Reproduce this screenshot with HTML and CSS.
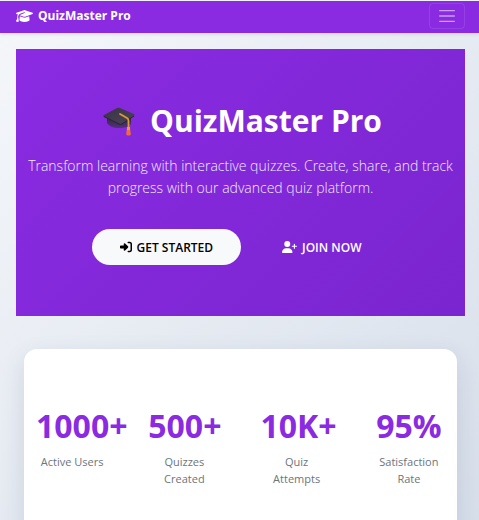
FILE: index.html
```html
<!DOCTYPE html>
<html lang="en">
<head>
<meta charset="utf-8">
<meta name="viewport" content="width=device-width, initial-scale=1">
<title>QuizMaster Pro</title>
<link rel="stylesheet" href="styles.css">
</head>
<body>
<header class="navbar">
  <a class="brand" href="#">
    <svg class="brand-icon" viewBox="0 0 640 512" aria-hidden="true"><path fill="currentColor" d="M320 32c-8.100 0-16.100 1.400-23.700 4.100L15.800 137.400C6.300 140.900 0 149.900 0 160s6.300 19.100 15.800 22.600l57.900 20.900C57.300 229.300 48 259.800 48 291.900v28.100c0 28.400-10.800 57.700-22.300 80.800-6.500 13-13.900 25.800-22.500 37.600C0 442.700-.9 448.300.9 453.400s6 8.900 11.200 10.200l64 16c4.200 1.100 8.700.3 12.400-2s6.300-6.100 7.100-10.400c8.600-42.800 4.300-81.200-2.100-108.700-3.200-14.200-7.500-28.700-13.500-42v-24.600c0-30.200 10.200-58.700 27.900-81.500 12.900-15.500 29.600-28 49.200-35.700l157-61.700c8.200-3.200 17.500.8 20.700 9s-.8 17.500-9 20.700l-157 61.700c-12.400 4.900-23.300 12.400-32.200 21.600l159.600 57.600c7.600 2.700 15.600 4.100 23.700 4.100s16.100-1.400 23.700-4.100l280.600-101c9.500-3.400 15.800-12.500 15.800-22.600s-6.300-19.100-15.800-22.600L343.700 36.100C336.100 33.400 328.100 32 320 32zM128 408c0 35.300 86 72 192 72s192-36.700 192-72L496.700 262.600 354.500 314c-11.100 4-22.800 6-34.500 6s-23.500-2-34.500-6L143.300 262.600 128 408z"/></svg>
    <span>QuizMaster Pro</span>
  </a>
  <button class="toggler" type="button" aria-label="Toggle navigation">
    <svg class="toggler-icon" viewBox="0 0 30 30" aria-hidden="true"><path d="M4 7h22M4 15h22M4 23h22" stroke="currentColor" stroke-width="2" stroke-linecap="round"/></svg>
  </button>
</header>
<main class="page">
  <section class="hero">
    <h1 class="hero-title">
      <svg class="cap" viewBox="0 0 32 29" aria-hidden="true">
        <defs>
          <linearGradient id="board" x1="0" y1="0" x2="1" y2="1"><stop offset="0" stop-color="#3a3346"/><stop offset="1" stop-color="#4b4458"/></linearGradient>
          <linearGradient id="base" x1="0" y1="0" x2="0" y2="1"><stop offset="0" stop-color="#302640"/><stop offset="1" stop-color="#54317e"/></linearGradient>
        </defs>
        <path d="M4 10v6c2 3 6 5 12 5s9-1 12-4v-7z" fill="url(#base)"/>
        <path d="M1 8 14 1c1-.5 2-.5 3 0l14 6c1 .5 1 1 0 2L19 17c-1 .6-2 .6-3 0L1 10c-1-.6-1-1.400 0-2z" fill="url(#board)"/>
        <path d="M1 9.500 16 17c1 .5 2 .5 3 0l12-8" fill="none" stroke="#282231" stroke-width="1"/>
        <path d="m17 7 7 4c1 .6 1.500 1.500 1.500 3v9" fill="none" stroke="#dd9b35" stroke-width="1.800" stroke-linecap="round"/>
        <path d="M24 21h3l.8 6c0 2-4.600 2-4.600 0z" fill="#ed6b3f"/>
        <path d="M24 20h3v3h-3z" fill="#f19a3a"/>
      </svg>
      <span>QuizMaster Pro</span>
    </h1>
    <p class="lead">Transform learning with interactive quizzes. Create, share, and track progress with our advanced quiz platform.</p>
    <div class="actions">
      <a class="btn btn-light" href="#">
        <svg class="btn-icon" viewBox="0 0 512 512" aria-hidden="true"><path fill="currentColor" d="M217.900 105.900 340.700 228.700c7.200 7.200 11.300 17.100 11.300 27.300s-4.100 20.100-11.300 27.300L217.900 406.100c-6.400 6.400-15 9.900-24 9.900-18.700 0-33.900-15.200-33.900-33.900V320H32c-17.700 0-32-14.300-32-32v-64c0-17.700 14.300-32 32-32h128v-62.100c0-18.700 15.200-33.900 33.900-33.900 9 0 17.600 3.600 24 9.900zM352 416h64c17.700 0 32-14.300 32-32V128c0-17.700-14.300-32-32-32h-64c-17.700 0-32-14.300-32-32s14.300-32 32-32h64c53 0 96 43 96 96v256c0 53-43 96-96 96h-64c-17.700 0-32-14.300-32-32s14.300-32 32-32z"/></svg>
        <span>GET STARTED</span>
      </a>
      <a class="btn btn-plain" href="#">
        <svg class="btn-icon btn-icon-wide" viewBox="0 0 640 512" aria-hidden="true"><path fill="currentColor" d="M96 128a128 128 0 1 1 256 0 128 128 0 1 1-256 0zM0 482.300C0 383.800 79.800 304 178.300 304h91.400C368.200 304 448 383.800 448 482.300c0 16.400-13.300 29.700-29.700 29.700H29.700C13.300 512 0 498.700 0 482.300zM504 312v-64h-64c-13.300 0-24-10.700-24-24s10.700-24 24-24h64v-64c0-13.300 10.700-24 24-24s24 10.700 24 24v64h64c13.300 0 24 10.700 24 24s-10.700 24-24 24h-64v64c0 13.300-10.700 24-24 24s-24-10.700-24-24z"/></svg>
        <span>JOIN NOW</span>
      </a>
    </div>
  </section>
  <section class="stats-card">
    <div class="stats">
      <div class="stat"><div class="value">1000+</div><div class="label">Active Users</div></div>
      <div class="stat"><div class="value">500+</div><div class="label">Quizzes Created</div></div>
      <div class="stat"><div class="value">10K+</div><div class="label">Quiz Attempts</div></div>
      <div class="stat"><div class="value">95%</div><div class="label">Satisfaction Rate</div></div>
    </div>
  </section>
</main>
</body>
</html>
```
FILE: styles.css
```css
* {
  box-sizing: border-box;
}

html {
  overflow-x: hidden;
  scrollbar-width: none;
}

body {
  margin: 0;
  font-family: "Open Sans", "Noto Sans", sans-serif;
  background: linear-gradient(135deg, #f5f7fa 0%, #d6deea 100%);
  min-height: 100vh;
}

.navbar {
  display: flex;
  align-items: center;
  justify-content: space-between;
  height: 33px;
  padding: 0 14px 3px 16px;
  border-top: 1px solid #f3f1f7;
  background: #8a2be2;
  color: #fff;
  box-shadow: 0 1px 4px rgba(0, 0, 0, 0.12);
}

.brand {
  display: flex;
  align-items: center;
  gap: 5px;
  color: #fff;
  font-size: 12px;
  font-weight: 700;
  text-decoration: none;
}

.brand-icon {
  width: 17px;
  height: 14px;
}

.toggler {
  display: flex;
  align-items: center;
  justify-content: center;
  width: 36px;
  height: 26px;
  padding: 0;
  border: 1px solid rgba(255, 255, 255, 0.1);
  border-radius: 4px;
  background: transparent;
  color: rgba(255, 255, 255, 0.55);
}

.toggler-icon {
  width: 20px;
  height: 20px;
}

.page {
  padding: 16px 14px 16px 16px;
}

.hero {
  padding: 52px 10px 51px;
  background: linear-gradient(135deg, #8a2be2 0%, #7a25cf 100%);
  color: #fff;
  text-align: center;
}

.hero-title {
  display: flex;
  align-items: center;
  justify-content: center;
  gap: 15px;
  margin: 0 0 14px;
  padding-left: 4px;
  font-size: 30px;
  line-height: 40px;
}

.cap {
  width: 32px;
  height: 29px;
}

.lead {
  margin: 0 0 30px;
  font-size: 14px;
  font-weight: 300;
  line-height: 22px;
  opacity: 0.9;
}

.actions {
  display: flex;
  justify-content: center;
  gap: 13px;
}

.btn {
  display: flex;
  align-items: center;
  gap: 5px;
  height: 36px;
  padding: 0 28px;
  border-radius: 18px;
  font-size: 12px;
  font-weight: 600;
  text-decoration: none;
}

.btn-light {
  background: #f8f9fa;
  color: #000;
}

.btn-plain {
  color: #fff;
}

.btn-icon {
  width: 12px;
  height: 12px;
}

.btn-icon-wide {
  width: 15px;
}

.stats-card {
  margin: 33px 8px 0;
  padding: 53px 0 64px;
  border-radius: 13px;
  background: #fff;
  box-shadow: 0 8px 24px rgba(31, 38, 80, 0.12);
}

.stats {
  display: grid;
  grid-template-columns: repeat(4, minmax(0, 1fr));
  margin: 0 -8px;
}

.stat {
  padding: 0 20px;
  text-align: center;
}

.value {
  color: #8a2be2;
  font-size: 32px;
  font-weight: 700;
  line-height: 48px;
}

.label {
  margin-top: 3px;
  color: #6c757d;
  font-size: 11px;
  line-height: 17px;
}
```
